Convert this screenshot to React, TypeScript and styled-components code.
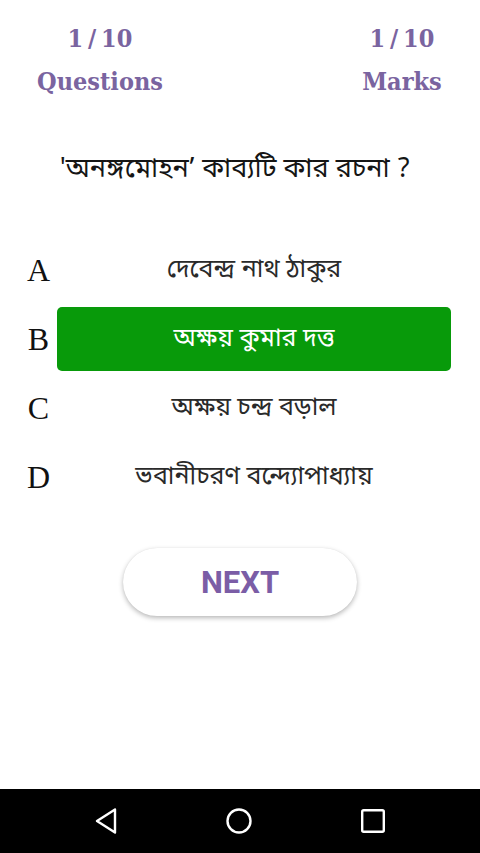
import React from "react";
import styled, { createGlobalStyle } from "styled-components";

const GlobalStyle = createGlobalStyle`
  html, body {
    margin: 0;
    padding: 0;
    background: #ffffff;
  }
  #root {
    height: 853px;
  }
`;

const BENGALI = `"Noto Sans Bengali", "Lohit Bengali", "Noto Sans", sans-serif`;

type Option = { letter: string; text: string; correct?: boolean };

const options: Option[] = [
  { letter: "A", text: "দেবেন্দ্র নাথ ঠাকুর" },
  { letter: "B", text: "অক্ষয় কুমার দত্ত", correct: true },
  { letter: "C", text: "অক্ষয় চন্দ্র বড়াল" },
  { letter: "D", text: "ভবানীচরণ বন্দ্যোপাধ্যায়" },
];

export default function App() {
  return (
    <>
      <GlobalStyle />
      <Screen>
        <Content>
          <Stats>
            <Stat>
              <StatValue>1 / 10</StatValue>
              <StatLabel>Questions</StatLabel>
            </Stat>
            <Stat>
              <StatValue>1 / 10</StatValue>
              <StatLabel>Marks</StatLabel>
            </Stat>
          </Stats>

          <Question>'অনঙ্গমোহন’ কাব্যটি কার রচনা ?</Question>

          <OptionList>
            {options.map((o) => (
              <OptionRow key={o.letter}>
                <Letter>{o.letter}</Letter>
                <Answer $correct={o.correct}>{o.text}</Answer>
              </OptionRow>
            ))}
          </OptionList>

          <NextWrap>
            <NextButton>NEXT</NextButton>
          </NextWrap>
        </Content>

        <NavBar>
          <NavIcon viewBox="0 0 24 28" width="24" height="28">
            <path
              d="M21 2.5 L3 14 L21 25.5 Z"
              fill="none"
              stroke="#fff"
              strokeWidth="2.4"
              strokeLinejoin="round"
            />
          </NavIcon>
          <NavIcon viewBox="0 0 28 28" width="28" height="28">
            <circle cx="14" cy="14" r="11.5" fill="none" stroke="#fff" strokeWidth="2.4" />
          </NavIcon>
          <NavIcon viewBox="0 0 26 26" width="26" height="26">
            <rect x="2.2" y="2.2" width="21.6" height="21.6" rx="1.5" fill="none" stroke="#fff" strokeWidth="2.4" />
          </NavIcon>
        </NavBar>
      </Screen>
    </>
  );
}

const Screen = styled.div`
  height: 100%;
  display: flex;
  flex-direction: column;
`;

const Content = styled.main`
  flex: 1;
  display: flex;
  flex-direction: column;
`;

const Stats = styled.section`
  display: flex;
  justify-content: space-between;
  padding: 21px 8px 0 30px;
`;

const Stat = styled.div`
  width: 140px;
  display: flex;
  flex-direction: column;
  align-items: center;
  font-family: "DejaVu Serif Condensed", "DejaVu Serif", serif;
  font-stretch: semi-condensed;
  font-weight: bold;
  color: #7a64a0;
`;

const StatValue = styled.div`
  font-size: 25px;
  line-height: 36px;
  word-spacing: -3px;
`;

const StatLabel = styled.div`
  font-size: 25px;
  line-height: 36px;
  margin-top: 7px;
`;

const Question = styled.h1`
  margin: 52px 0 0;
  padding: 0 30px 0 20px;
  text-align: center;
  font-family: ${BENGALI};
  font-weight: normal;
  font-size: 27px;
  line-height: 36px;
  color: #151515;
`;

const OptionList = styled.div`
  display: flex;
  flex-direction: column;
  gap: 5px;
  margin-top: 50px;
  padding-right: 29px;
`;

const OptionRow = styled.div`
  display: flex;
  align-items: center;
  height: 64px;
`;

const Letter = styled.div`
  width: 57px;
  flex-shrink: 0;
  padding-left: 20px;
  box-sizing: border-box;
  text-align: center;
  font-family: "Liberation Serif", serif;
  font-size: 32px;
  color: #111;
`;

const Answer = styled.div<{ $correct?: boolean }>`
  flex: 1;
  height: 100%;
  display: flex;
  align-items: center;
  justify-content: center;
  border-radius: 5px;
  background: ${(p) => (p.$correct ? "#089a0a" : "transparent")};
  color: ${(p) => (p.$correct ? "#ffffff" : "#2a2a2a")};
  font-family: ${BENGALI};
  font-size: 25px;
`;

const NextWrap = styled.div`
  display: flex;
  justify-content: center;
  margin-top: 39px;
`;

const NextButton = styled.button`
  width: 234px;
  height: 68px;
  border: none;
  border-radius: 34px;
  background: #ffffff;
  box-shadow: 0 2px 5px rgba(0, 0, 0, 0.28), 0 0 1px rgba(0, 0, 0, 0.08);
  font-family: Roboto, "Liberation Sans", sans-serif;
  font-weight: bold;
  font-size: 31px;
  color: #7b5da6;
  cursor: pointer;
`;

const NavBar = styled.nav`
  height: 64px;
  flex-shrink: 0;
  background: #000;
  display: flex;
  align-items: center;
  justify-content: space-between;
  padding: 0 94px;
`;

const NavIcon = styled.svg`
  display: block;
`;
